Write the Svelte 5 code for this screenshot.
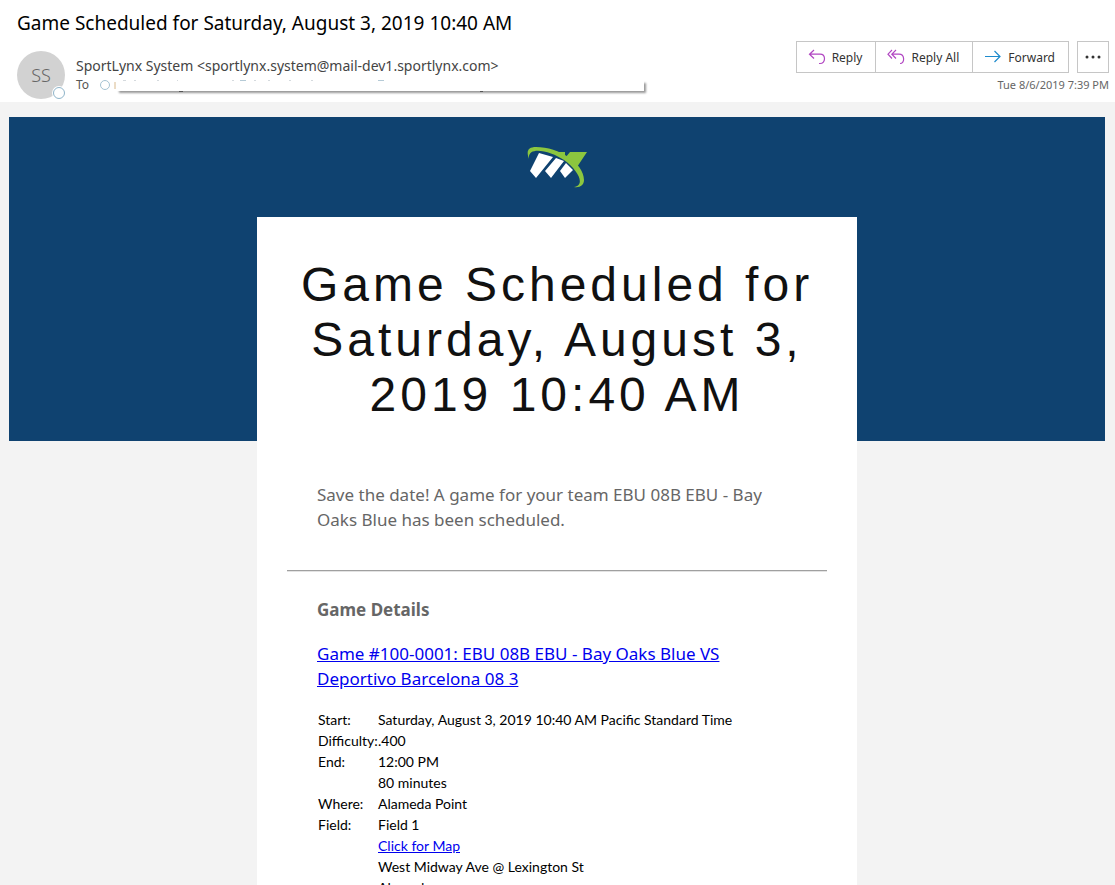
<script>
	const title = 'Game Scheduled for Saturday, August 3, 2019 10:40 AM';
	let selected = $state('');

	const details = [
		{ label: 'Start:', value: 'Saturday, August 3, 2019 10:40 AM Pacific Standard Time' },
		{ label: 'Difficulty:', value: '.400' },
		{ label: 'End:', value: '12:00 PM' },
		{ label: '', value: '80 minutes' },
		{ label: 'Where:', value: 'Alameda Point' },
		{ label: 'Field:', value: 'Field 1' },
		{ label: '', value: 'Click for Map', link: true },
		{ label: '', value: 'West Midway Ave @ Lexington St' },
		{ label: '', value: 'Alameda' }
	];
</script>

<div class="window">
	<header>
		<h1>{title}</h1>
		<div class="info">
			<div class="avatar">
				SS
				<span class="presence"></span>
			</div>
			<div class="people">
				<div class="from">SportLynx System &lt;sportlynx.system@mail-dev1.sportlynx.com&gt;</div>
				<div class="to">
					<span>To</span>
					<span class="dot"></span>
					<div class="recipients">
						<div class="cover"></div>
						<svg width="532" height="16" viewBox="0 0 532 16" fill="none">
							<path d="M1 5v7" stroke="#d8b98c" />
							<path d="M9 3.500h3M20 3.500h2M43 3.500h2M63 3.500h1M118 3.500h2M140 3.500h2M154 3.500h2M175 3.500h2M197 3.500h2" stroke="#d5dade" />
							<path d="M126 3.500h6M264 3.500h6" stroke="#b5cad6" />
							<path d="M65 14.500h4M366 14.500h3" stroke="#555" />
						</svg>
					</div>
				</div>
			</div>
			<div class="side">
				<div class="actions">
					<div class="group">
						<button onclick={() => (selected = 'reply')}>
							<svg width="18" height="16" viewBox="0 0 18 16" fill="none" stroke="#b146c2" stroke-width="1.2">
								<path d="M6 1L1.500 5.200L6 9.500M1.500 5.200H12C18 5.200 18 14.500 12 14.500H11" />
							</svg>
							Reply
						</button>
						<button onclick={() => (selected = 'replyAll')}>
							<svg width="18" height="16" viewBox="0 0 18 16" fill="none" stroke="#b146c2" stroke-width="1.2">
								<path d="M5 1L1 5.200L5 9.500M9 1L4.800 5.200L9 9.500M4.800 5.200H12C18 5.200 18 14.500 13 14.500" />
							</svg>
							Reply All
						</button>
						<button onclick={() => (selected = 'forward')}>
							<svg width="18" height="16" viewBox="0 0 18 16" fill="none" stroke="#1e8bcd" stroke-width="1.2">
								<path d="M1 7.500H16M10.500 2L16 7.500L10.500 13" />
							</svg>
							Forward
						</button>
					</div>
					<button class="more" aria-label="More actions">
						<svg width="16" height="4" viewBox="0 0 16 4" fill="#333">
							<circle cx="2" cy="2" r="1.500" />
							<circle cx="8" cy="2" r="1.500" />
							<circle cx="14" cy="2" r="1.500" />
						</svg>
					</button>
				</div>
				<div class="date">Tue 8/6/2019 7:39 PM</div>
			</div>
		</div>
	</header>

	<main>
		<div class="banner">
			<svg class="logo" width="60" height="42" viewBox="0 0 60 42">
				<path fill="#8cc63f" d="M25 6H38V12L43 6H60L50 21L39 12Z" />
				<path fill="#fff" d="M12 7L26 11L9 32L3 25ZM29 12L37 15L24 32L18 25ZM39 17L46 24L38 32L33 25Z" />
				<path fill="none" stroke="#0f4270" stroke-width="2" d="M20 4C34 8 48 17 55 30" />
				<path fill="#8cc63f" d="M2 13C-1 5 1 1 9 1C32 1 57 17 57 34C57 39 53 42 47 41C59 39 51 24 37 14C24 5 0 -1 2 13Z" />
			</svg>
			<div class="card">
				<h2>{title}</h2>
				<p class="intro">
					Save the date! A game for your team EBU 08B EBU - Bay<br />
					Oaks Blue has been scheduled.
				</p>
				<hr />
				<section>
					<h3>Game Details</h3>
					<p class="game">
						<a href="#game"
							>Game #100-0001: EBU 08B EBU - Bay Oaks Blue VS<br />
							Deportivo Barcelona 08 3</a
						>
					</p>
					<table>
						<tbody>
							{#each details as row}
								<tr>
									<th scope="row">{row.label}</th>
									<td>
										{#if row.link}
											<a href="#map">{row.value}</a>
										{:else}
											{row.value}
										{/if}
									</td>
								</tr>
							{/each}
						</tbody>
					</table>
				</section>
			</div>
		</div>
	</main>
</div>

<style>
	:global(body) {
		background: #f3f3f3;
	}
	.window {
		height: 100vh;
		display: flex;
		flex-direction: column;
		overflow: hidden;
		font-family: 'Noto Sans', 'Open Sans', sans-serif;
	}
	header {
		flex: none;
		background: white;
		padding: 10px 6px 3px 17px;
	}
	h1 {
		margin: 0;
		font-size: 19px;
		line-height: 26px;
		font-weight: 400;
		color: black;
	}
	.info {
		display: flex;
		gap: 11px;
		padding-top: 5px;
	}
	.avatar {
		position: relative;
		width: 48px;
		height: 48px;
		margin-top: 10px;
		border-radius: 50%;
		background: #d2d2d2;
		color: #666;
		font-size: 18px;
		font-weight: 300;
		line-height: 48px;
		text-align: center;
	}
	.presence {
		position: absolute;
		right: 0;
		bottom: 0;
		width: 10px;
		height: 10px;
		border: 1px solid #8fb4c9;
		border-radius: 50%;
		background: white;
		box-shadow: 0 0 0 1px white;
	}
	.people {
		flex: 1;
		min-width: 0;
		padding-top: 14px;
	}
	.from {
		font-size: 14px;
		line-height: 22px;
		color: #444;
		white-space: nowrap;
	}
	.to {
		display: flex;
		align-items: center;
		font-size: 12px;
		line-height: 16px;
		color: #555;
	}
	.dot {
		width: 8px;
		height: 8px;
		margin: 0 4px 0 11px;
		border: 1px solid #a5c3d3;
		border-radius: 50%;
	}
	.recipients {
		position: relative;
		height: 16px;
	}
	.recipients svg {
		position: relative;
	}
	.cover {
		position: absolute;
		top: 4px;
		left: 3px;
		right: 2px;
		bottom: 2px;
		background: white;
		box-shadow: 2px 2px 2px #999;
	}
	.side {
		flex: none;
	}
	.actions {
		display: flex;
		justify-content: flex-end;
		gap: 8px;
	}
	.group {
		display: flex;
	}
	button {
		display: flex;
		align-items: center;
		gap: 6px;
		height: 32px;
		padding: 0 13px 0 11px;
		border: 1px solid #c6c6c6;
		background: white;
		font-family: inherit;
		font-size: 12px;
		color: #333;
		cursor: pointer;
	}
	.group button + button {
		border-left: none;
	}
	button:hover {
		background: #f3f3f3;
	}
	.more {
		width: 32px;
		justify-content: center;
		padding: 0;
	}
	.date {
		padding-top: 4px;
		font-size: 11px;
		line-height: 16px;
		color: #666;
		text-align: right;
	}
	main {
		flex: 1;
		min-height: 0;
		padding: 15px 10px 0 9px;
	}
	.banner {
		background: linear-gradient(#0f4270 324px, transparent 324px);
	}
	.logo {
		display: block;
		margin: 0 auto;
		padding: 29px 0;
	}
	.card {
		box-sizing: border-box;
		max-width: 600px;
		margin: 0 auto;
		padding: 40px 30px;
		background: white;
	}
	h2 {
		margin: 0;
		font-family: 'Liberation Sans', Arial, sans-serif;
		font-size: 48px;
		line-height: 55px;
		font-weight: 400;
		letter-spacing: 4px;
		text-align: center;
		color: #111;
	}
	.intro {
		margin: 0;
		padding: 60px 30px 38px;
		font-size: 17px;
		line-height: 25px;
		color: #666;
	}
	hr {
		margin: 0;
		border: none;
		border-top: 1px solid #a0a0a0;
		border-bottom: 1px solid #e3e3e3;
	}
	section {
		padding: 25px 30px;
	}
	h3 {
		margin: 0;
		font-size: 17px;
		line-height: 25px;
		color: #666;
	}
	.game {
		margin: 0;
		padding: 19px 0 18px;
		font-size: 17px;
		line-height: 25px;
	}
	a {
		color: #0000ee;
	}
	table {
		width: 100%;
		table-layout: fixed;
		border-collapse: collapse;
		font-family: Lato, sans-serif;
		font-size: 14px;
		line-height: 21px;
		color: black;
	}
	th {
		width: 60px;
		padding: 0 0 0 1px;
		font-weight: 400;
		text-align: left;
		white-space: nowrap;
	}
	td {
		padding: 0;
	}
</style>
